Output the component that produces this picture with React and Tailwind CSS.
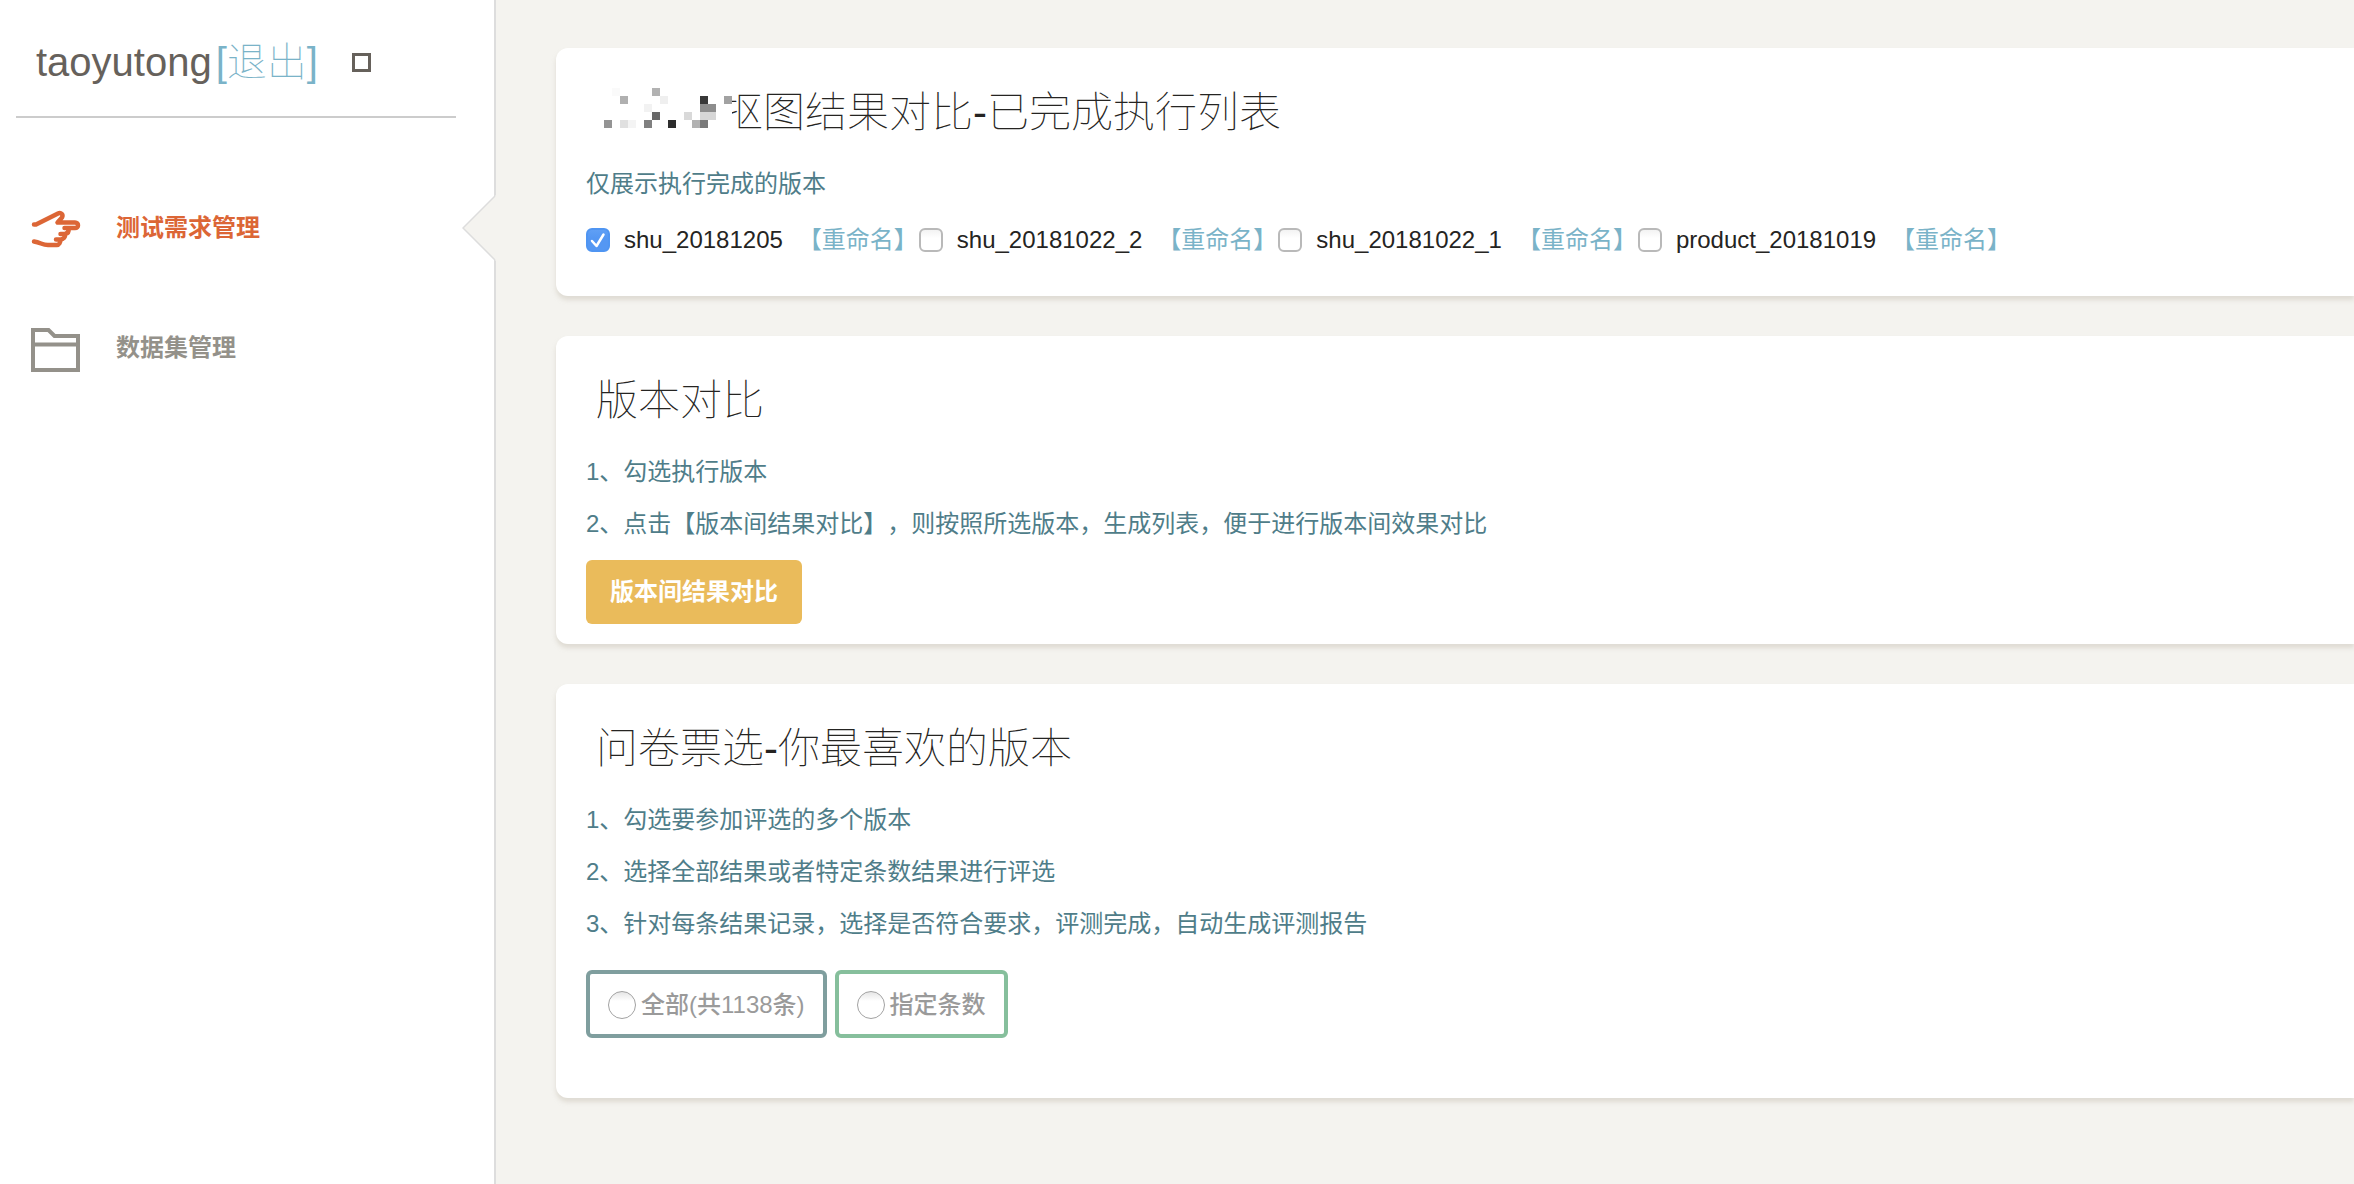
const versions = [
  { id: 'v1', name: 'shu_20181205', checked: true },
  { id: 'v2', name: 'shu_20181022_2', checked: false },
  { id: 'v3', name: 'shu_20181022_1', checked: false },
  { id: 'v4', name: 'product_20181019', checked: false },
];

// [column, row, colour] on an 8px grid
const mosaic = [
  [1, 0, '#fafafa'], [6, 0, '#b2b2b2'],
  [2, 1, '#b0b0b0'], [7, 1, '#efefef'], [12, 1, '#383838'], [15, 1, '#a2a2a2'],
  [5, 2, '#f2f2f2'], [12, 2, '#8d8d8d'], [13, 2, '#8d8d8d'],
  [6, 3, '#686868'], [10, 3, '#d9d9d9'], [12, 3, '#d6d6d6'], [13, 3, '#d6d6d6'],
  [0, 4, '#949494'], [2, 4, '#e0e0e0'], [3, 4, '#f4f4f4'], [5, 4, '#808080'], [7, 4, '#fcfcfc'],
  [8, 4, '#2c2c2c'], [11, 4, '#b2b2b2'], [12, 4, '#7a7a7a'],
];

const HandIcon = () => (
  <svg aria-hidden="true" className="w-[50px] h-[50px]" viewBox="0 0 50 50" fill="none" stroke="currentColor" strokeWidth="4.500" strokeLinecap="round" strokeLinejoin="round">
    <path d="M3 21.500 H5 L27 10.500 C30 9 32.500 11.500 31 14.500 L26.500 19.500 H44 C48 19.500 48 25 44 25 H33.500 M37.500 25.500 C38 28.500 36.500 30.500 34 31 H29.500 M34 31 C34.500 34 32.500 36.500 29.500 36.500 H25 M29.500 36.500 C29.500 39.500 28 42 26 42 H17 C11 42 10 39.500 3 38.500" />
  </svg>
);

const FolderIcon = () => (
  <svg aria-hidden="true" className="w-[50px] h-[50px]" viewBox="0 0 50 50" fill="none" stroke="currentColor" strokeWidth="4">
    <path d="M2 7 H17.500 L23.500 13 H47 V47 H2 Z M2 21.500 H47" />
  </svg>
);

const Arrow = () => (
  <svg aria-hidden="true" className="absolute right-[-2px] top-1/2 -translate-y-1/2 w-[34px] h-[66px]" viewBox="0 0 34 66">
    <path d="M34 0 L1 33 L34 66 Z" fill="#f4f3ef" />
    <path d="M33 1 L1 33 L33 65" fill="none" stroke="#dddddd" strokeWidth="1.500" />
  </svg>
);

const Card = ({ title, className, children }) => (
  <section className={`rounded-l-xl bg-white pl-[30px] pt-10 shadow-[0_4px_4px_rgba(204,197,185,0.5)] ${className}`}>
    <h2 className="relative h-[50px] mb-5 pl-[10px] text-[42px] leading-[50px] font-thin text-[#252422]">{title}</h2>
    {children}
  </section>
);

const Note = ({ children }) => (
  <p className="text-2xl leading-[52px] text-[#4f7d89] [text-spacing-trim:space-all]">{children}</p>
);

const Version = ({ id, name, checked }) => (
  <li className="flex items-center">
    <span className="grid size-6 shrink-0">
      <input
        id={id}
        type="checkbox"
        defaultChecked={checked}
        className="peer col-start-1 row-start-1 size-6 appearance-none rounded-md border-2 border-[#b9b9b9] bg-gradient-to-b from-[#f3f3f3] to-white to-40% checked:border-[#4f95f2] checked:from-[#5f9ff5] checked:to-[#5497f3]"
      />
      <svg aria-hidden="true" className="pointer-events-none invisible peer-checked:visible col-start-1 row-start-1 size-6" viewBox="0 0 24 24" fill="none" stroke="#fff" strokeWidth="2.500" strokeLinecap="round" strokeLinejoin="round">
        <path d="M6 13 L10.500 18 L17.500 6.500" />
      </svg>
    </span>
    <label htmlFor={id} className="pl-[14px] pr-[15px] text-[#252422]">{name}</label>
    <a href="#rename" className="text-[#7ab3c8]">【重命名】</a>
  </li>
);

const Choice = ({ label, className }) => (
  <label className={`flex h-[68px] items-center gap-[5px] rounded-md border-4 px-[18px] pt-[2px] text-2xl font-medium text-[#9a9a9a] ${className}`}>
    <input type="radio" name="scope" className="size-7 appearance-none rounded-full border border-[#a2a2a2] bg-gradient-to-b from-[#e6e6e6] to-white to-35% checked:border-8 checked:border-[#4f95f2]" />
    {label}
  </label>
);

const App = () => (
  <div className="flex min-h-screen overflow-hidden bg-[#f4f3ef] font-['Liberation_Sans','Noto_Sans_CJK_SC',sans-serif]">
    <aside className="w-[496px] shrink-0 border-r-2 border-[#dddddd] bg-white">
      <div className="ml-4 mr-[38px] flex h-[118px] items-center border-b-2 border-[#cccccc] pt-2 pl-5">
        <span className="text-[40px] leading-[60px] font-light text-[#66615b]">
          taoyutong<a href="#logout" className="ml-1 font-thin text-[#7ab3c8]">[退出]</a>
        </span>
        <button type="button" aria-label="菜单" className="ml-[34px] size-[19px] border-[3px] border-[#66615b]" />
      </div>
      <nav className="mt-[70px] text-2xl font-bold">
        <a href="#requirements" aria-current="page" className="relative flex h-20 items-center gap-[35px] pl-[31px] text-[#dc6636]">
          <HandIcon />
          测试需求管理
          <Arrow />
        </a>
        <a href="#datasets" className="mt-10 flex h-20 items-center gap-[35px] pl-[31px] text-[#94918a]">
          <FolderIcon />
          数据集管理
        </a>
      </nav>
    </aside>

    <main className="flex min-w-0 grow flex-col gap-10 py-12 pl-[60px]">
      <Card
        className="pb-[30px]"
        title={
          <>
            <span className="block pl-[125px] whitespace-nowrap">抠图结果对比-已完成执行列表</span>
            <svg aria-hidden="true" className="absolute left-[18px] top-0 h-[50px] w-[130px]" viewBox="0 0 130 50" shapeRendering="crispEdges">
              <rect width="128" height="50" fill="#fff" />
              <rect y="26" width="130" height="24" fill="#fff" />
              {mosaic.map(([x, y, fill]) => (
                <rect key={`${x}-${y}`} x={x * 8} y={y * 8} width="8" height="8" fill={fill} />
              ))}
            </svg>
          </>
        }
      >
        <Note>仅展示执行完成的版本</Note>
        <ul className="mt-1 flex flex-wrap gap-x-px text-2xl leading-[52px]">
          {versions.map((v) => (
            <Version key={v.id} {...v} />
          ))}
        </ul>
      </Card>

      <Card className="pb-5" title="版本对比">
        <Note>1、勾选执行版本</Note>
        <Note>2、点击【版本间结果对比】，则按照所选版本，生成列表，便于进行版本间效果对比</Note>
        <button type="button" className="mt-[10px] h-16 rounded-md bg-[#eabb5b] px-6 text-2xl font-bold text-white">
          版本间结果对比
        </button>
      </Card>

      <Card className="pb-[60px]" title="问卷票选-你最喜欢的版本">
        <Note>1、勾选要参加评选的多个版本</Note>
        <Note>2、选择全部结果或者特定条数结果进行评选</Note>
        <Note>3、针对每条结果记录，选择是否符合要求，评测完成，自动生成评测报告</Note>
        <div className="mt-5 flex gap-2">
          <Choice label="全部(共1138条)" className="border-[#7f9e9e]" />
          <Choice label="指定条数" className="border-[#86bf9c]" />
        </div>
      </Card>
    </main>
  </div>
);

export default App;
